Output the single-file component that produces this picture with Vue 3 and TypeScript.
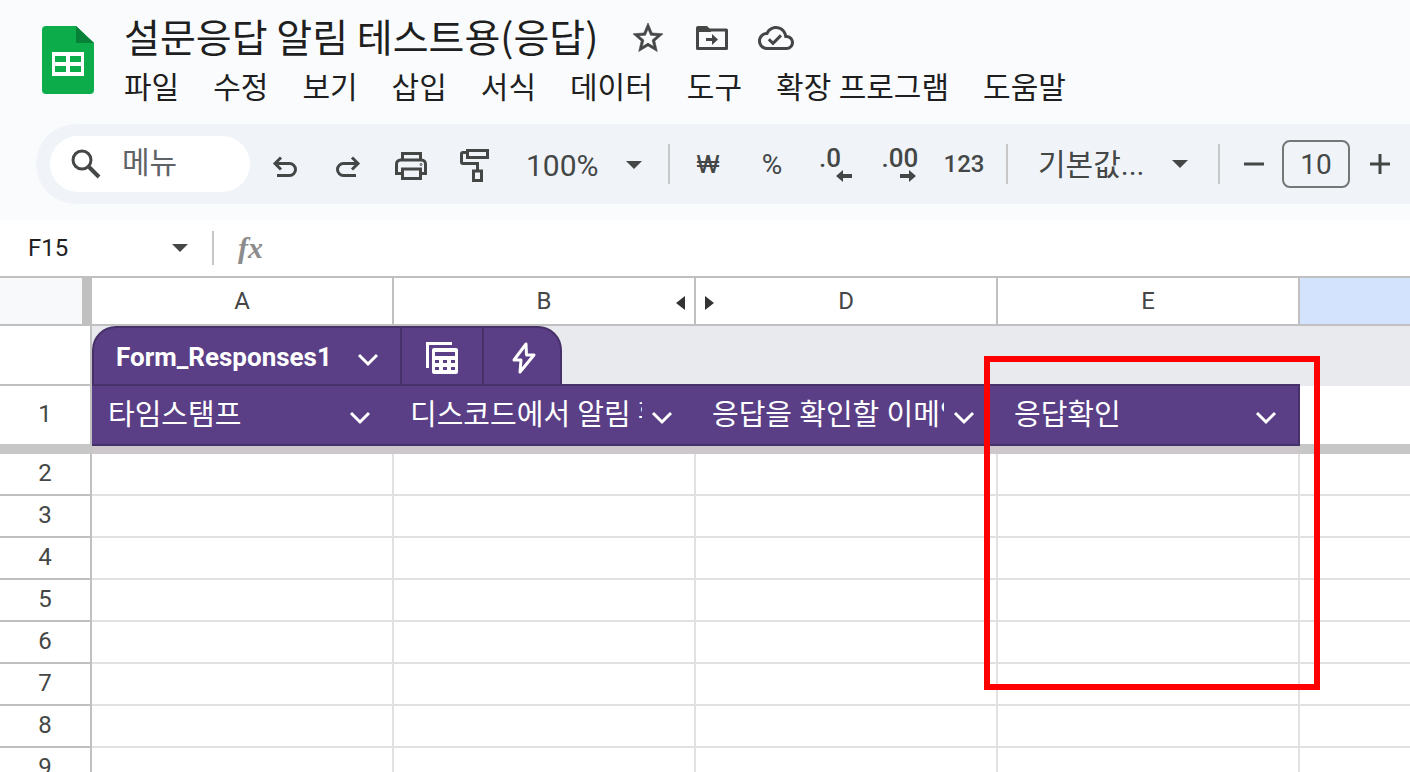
<script setup lang="ts">
import { ref } from 'vue'

interface Column {
  id: string
  label: string
  hiddenAfter?: boolean
  hiddenBefore?: boolean
  marked?: boolean
}

const title = ref('설문응답 알림 테스트용(응답)')
const cellName = ref('F15')
const formula = ref('')
const fontSize = ref('10')

const menus: string[] = ['파일', '수정', '보기', '삽입', '서식', '데이터', '도구', '확장 프로그램', '도움말']

const columns: Column[] = [
  { id: 'A', label: '타임스탬프' },
  { id: 'B', label: '디스코드에서 알림 확인', hiddenAfter: true },
  { id: 'D', label: '응답을 확인할 이메일', hiddenBefore: true },
  { id: 'E', label: '응답확인', marked: true },
]

const rows: number[] = [2, 3, 4, 5, 6, 7, 8, 9]
</script>

<template>
  <div class="sheets">
    <header class="top">
      <div class="heading">
        <a class="logo" href="#" aria-label="Sheets">
          <svg width="52" height="68" viewBox="0 0 52 68">
            <path d="M4 0H34L52 17V64a4 4 0 0 1-4 4H4a4 4 0 0 1-4-4V4a4 4 0 0 1 4-4z" fill="#0cac4b" />
            <path d="M34 0L52 17H34z" fill="#078138" />
            <path d="M10 26H42V50H10z" fill="#fff" />
            <path d="M13 30H24V36H13zM28 30H39V36H28zM13 40H24V46H13zM28 40H39V46H28z" fill="#0cac4b" />
          </svg>
        </a>
        <div class="names">
          <div class="title-row">
            <h1>{{ title }}</h1>
            <button class="icon" aria-label="별표">
              <svg width="36" height="36" viewBox="0 0 24 24" fill="currentColor"><path d="M22 9.24l-7.19-.62L12 2 9.19 8.63 2 9.24l5.46 4.73L5.82 21 12 17.27 18.18 21l-1.63-7.03L22 9.24zM12 15.4l-3.76 2.27 1-4.28-3.32-2.88 4.38-.38L12 6.1l1.71 4.04 4.38.38-3.32 2.88 1 4.28L12 15.4z" stroke="currentColor" stroke-width=".4" /></svg>
            </button>
            <button class="icon" aria-label="이동">
              <svg width="36" height="36" viewBox="0 0 36 36" fill="none" stroke="currentColor" stroke-width="3">
                <path d="M3.500 10H32.500V28.500H3.500z" stroke-linejoin="round" />
                <path d="M2 11V8a2 2 0 0 1 2-2H13L17 10V12H2z" fill="currentColor" stroke="none" />
                <path d="M12 19.500H20" />
                <path d="M18 14L24 19.500L18 25z" fill="currentColor" stroke="none" />
              </svg>
            </button>
            <button class="icon" aria-label="드라이브에 저장됨">
              <svg width="36" height="36" viewBox="0 0 24 24" fill="currentColor"><path d="M19.35 10.04C18.67 6.59 15.64 4 12 4 9.11 4 6.61 5.64 5.36 8.04 2.35 8.36 0 10.91 0 14c0 3.31 2.69 6 6 6h13c2.76 0 5-2.24 5-5 0-2.64-2.05-4.78-4.65-4.96zM19 18H6c-2.21 0-4-1.79-4-4 0-2.05 1.53-3.76 3.56-3.97l1.07-.11.5-.95C8.08 7.14 9.94 6 12 6c2.62 0 4.88 1.86 5.39 4.43l.3 1.5 1.53.11c1.56.1 2.78 1.41 2.78 2.96 0 1.65-1.35 3-3 3zm-9-3.82l-2.09-2.09L6.5 13.5 10 17l6.01-6.01-1.41-1.41z" /></svg>
            </button>
          </div>
          <nav class="menus">
            <button v-for="m in menus" :key="m">{{ m }}</button>
          </nav>
        </div>
      </div>

      <div class="toolbar">
        <label class="search">
          <svg width="32" height="32" viewBox="0 0 32 32" fill="none" stroke="#444746" stroke-width="3">
            <circle cx="12" cy="12" r="9" /><path d="M18.500 18.500L29 29" stroke-width="4" />
          </svg>
          <input type="text" placeholder="메뉴" aria-label="메뉴" />
        </label>

        <button class="tool" aria-label="실행취소">
          <svg width="32" height="32" viewBox="0 0 32 32" fill="none" stroke="currentColor" stroke-width="3">
            <path d="M6 15.500H20.500a6 6 0 0 1 0 12H8M12 9.500L6 15.500L12 21.500" />
          </svg>
        </button>
        <button class="tool" aria-label="재실행">
          <svg width="32" height="32" viewBox="0 0 32 32" fill="none" stroke="currentColor" stroke-width="3">
            <path d="M26 15.500H11.500a6 6 0 0 0 0 12H24M20 9.500L26 15.500L20 21.500" />
          </svg>
        </button>
        <button class="tool" aria-label="인쇄">
          <svg width="32" height="32" viewBox="0 0 32 32" fill="none" stroke="currentColor" stroke-width="3">
            <path d="M7.500 12V5.500H25.500V12" />
            <path d="M7 25.500H1.500V16a4 4 0 0 1 4-4H26.500a4 4 0 0 1 4 4V25.500H25" />
            <path d="M7.500 21H25.500V30.500H7.500z" /><circle cx="26" cy="16.500" r="1" stroke-width="1" />
          </svg>
        </button>
        <button class="tool" aria-label="서식 복사">
          <svg width="32" height="36" viewBox="0 0 32 36" fill="none" stroke="currentColor" stroke-width="3">
            <path d="M9.500 4.500H29.500V11.500H9.500z" />
            <path d="M9 6.500H5a1.500 1.500 0 0 0-1.500 1.500V16a1.500 1.500 0 0 0 1.500 1.500H19.500V25" />
            <path d="M15.500 25H23.500V34.500H15.500z" />
          </svg>
        </button>

        <div class="pick zoom">
          <select aria-label="확대/축소"><option>100%</option></select>
          <svg width="16" height="8" viewBox="0 0 16 8"><path d="M0 0H16L8 8z" fill="#444746" /></svg>
        </div>
        <span class="sep"></span>

        <button class="tool format won" aria-label="통화 형식">₩</button>
        <button class="tool format percent">%</button>
        <button class="tool format decimals fewer" aria-label="소수점 이하 자릿수 감소">
          <span>.0</span>
          <svg width="16" height="12" viewBox="0 0 16 12" fill="currentColor"><path d="M0 6L7 0V4H16V8H7V12z" /></svg>
        </button>
        <button class="tool format decimals" aria-label="소수점 이하 자릿수 늘리기">
          <span>.00</span>
          <svg width="16" height="12" viewBox="0 0 16 12" fill="currentColor"><path d="M16 6L9 0V4H0V8H9V12z" /></svg>
        </button>
        <button class="tool format">123</button>
        <span class="sep"></span>

        <div class="pick font">
          <select aria-label="글꼴"><option>기본값...</option></select>
          <svg width="16" height="8" viewBox="0 0 16 8"><path d="M0 0H16L8 8z" fill="#444746" /></svg>
        </div>
        <span class="sep"></span>

        <button class="step" aria-label="글꼴 크기 줄이기">
          <svg width="20" height="22" viewBox="0 0 20 22"><path d="M0 11H20" stroke="#444746" stroke-width="3" /></svg>
        </button>
        <input v-model="fontSize" class="size" type="text" aria-label="글꼴 크기" />
        <button class="step" aria-label="글꼴 크기 늘리기">
          <svg width="22" height="22" viewBox="0 0 22 22"><path d="M1 11H21M11 1V21" stroke="#444746" stroke-width="3" /></svg>
        </button>
      </div>
    </header>

    <div class="formula-bar">
      <input v-model="cellName" class="cell-name" type="text" aria-label="이름 상자" />
      <button class="caret" aria-label="이름이 지정된 범위">
        <svg width="16" height="8" viewBox="0 0 16 8"><path d="M0 0H16L8 8z" fill="#444746" /></svg>
      </button>
      <label for="formula" class="fx">fx</label>
      <input id="formula" v-model="formula" class="formula" type="text" />
    </div>

    <table class="grid">
      <colgroup>
        <col class="c-num" />
        <col v-for="c in columns" :key="c.id" class="c-data" />
        <col />
      </colgroup>
      <thead>
        <tr class="letters">
          <td class="corner"></td>
          <th v-for="c in columns" :key="c.id" scope="col">
            <div class="letter">
              <button v-if="c.hiddenBefore" class="reveal before" aria-label="숨겨진 열 표시">
                <svg width="9" height="14" viewBox="0 0 9 14"><path d="M0 0L9 7L0 14z" fill="#333" /></svg>
              </button>
              <span>{{ c.id }}</span>
              <button v-if="c.hiddenAfter" class="reveal after" aria-label="숨겨진 열 표시">
                <svg width="9" height="14" viewBox="0 0 9 14"><path d="M9 0L0 7L9 14z" fill="#333" /></svg>
              </button>
            </div>
          </th>
          <th class="selected" scope="col" aria-label="F"></th>
        </tr>
      </thead>
      <tbody>
        <tr class="chip-row">
          <td class="num"></td>
          <td class="chip-cell" colspan="5">
            <div class="chip-line">
              <div class="chip">
                <button class="chip-name">
                  <span>Form_Responses1</span>
                  <svg width="22" height="14" viewBox="0 0 22 14" fill="none" stroke="currentColor" stroke-width="3"><path d="M2 2L11 11L20 2" /></svg>
                </button>
                <button class="chip-icon" aria-label="표 보기">
                  <svg width="34" height="34" viewBox="0 0 34 34">
                    <path d="M27 2.500H2.500V27" fill="none" stroke="currentColor" stroke-width="3" />
                    <rect x="7" y="7" width="26" height="26" rx="2" fill="currentColor" />
                    <path d="M10 11H30V15H10zM10 19H14V22H10zM18 19H22V22H18zM26 19H30V22H26zM10 26H14V29H10zM18 26H22V29H18zM26 26H30V29H26z" fill="#5b3f86" />
                  </svg>
                </button>
                <button class="chip-icon" aria-label="자동화">
                  <svg width="26" height="34" viewBox="0 0 26 34" fill="none" stroke="currentColor" stroke-width="3" stroke-linejoin="round"><path d="M15 3L3 19H10L9 31L23 14H15.500z" /></svg>
                </button>
              </div>
            </div>
          </td>
        </tr>
        <tr class="head-row">
          <th class="num" scope="row">1</th>
          <td v-for="c in columns" :key="c.id" class="head-cell" :class="{ last: c.marked }">
            <div class="head-inner">
              <span>{{ c.label }}</span>
              <button :aria-label="c.label + ' 메뉴'">
                <svg width="22" height="14" viewBox="0 0 22 14" fill="none" stroke="currentColor" stroke-width="3"><path d="M2 2L11 11L20 2" /></svg>
              </button>
            </div>
            <div v-if="c.marked" class="marker"></div>
          </td>
          <td class="plain"></td>
        </tr>
        <tr class="freeze">
          <td></td>
          <td class="under" colspan="4"></td>
          <td></td>
        </tr>
        <tr v-for="r in rows" :key="r" class="data-row">
          <th class="num" scope="row">{{ r }}</th>
          <td v-for="c in columns" :key="c.id"></td>
          <td class="plain"></td>
        </tr>
      </tbody>
    </table>
  </div>
</template>

<style>
body {
  background: #fff;
  overflow: hidden;
}
</style>

<style scoped>
.sheets {
  height: 100vh;
  overflow: hidden;
  color: #1f1f1f;
  background: #fff;
  font-family: Roboto, "Noto Sans CJK KR", sans-serif;
}
.sheets * {
  box-sizing: border-box;
}
button,
input,
select {
  margin: 0;
  padding: 0;
  border: 0;
  background: none;
  color: inherit;
  font: inherit;
  border-radius: 0;
  outline: none;
}
svg {
  display: block;
  flex: none;
}
.top {
  padding-bottom: 16px;
  background: #f9fbfd;
}
.heading {
  display: flex;
  height: 124px;
  padding: 14px 0 0 42px;
}
.logo {
  margin-top: 12px;
}
.names {
  margin-left: 30px;
}
.title-row {
  display: flex;
  align-items: center;
  height: 48px;
  margin-bottom: 2px;
}
h1 {
  margin: 0 18px 0 0;
  padding-bottom: 6px;
  font-size: 39px;
  line-height: 42px;
  font-weight: 400;
  font-family: "Noto Sans CJK KR", sans-serif;
  white-space: nowrap;
}
.icon {
  width: 64px;
  display: flex;
  justify-content: center;
  color: #444746;
}
.menus {
  display: flex;
  gap: 34px;
  height: 48px;
}
.menus button {
  font-size: 30px;
  line-height: 48px;
  white-space: nowrap;
}
.toolbar {
  display: flex;
  align-items: center;
  height: 80px;
  margin-left: 36px;
  padding-left: 14px;
  border-radius: 40px 0 0 40px;
  background: #f0f4f9;
  color: #444746;
  overflow: hidden;
}
.toolbar > * {
  flex: none;
}
.search {
  display: flex;
  align-items: center;
  gap: 20px;
  width: 200px;
  height: 56px;
  margin-right: 3px;
  padding-left: 20px;
  border-radius: 28px;
  background: #fff;
}
.search input {
  width: 100px;
  height: 48px;
  padding-bottom: 4px;
  font-size: 30px;
}
.search input::placeholder {
  color: #5f6368;
  opacity: 1;
}
.tool {
  display: flex;
  align-items: center;
  justify-content: center;
  width: 63px;
  height: 56px;
}
.format {
  width: 64px;
  font-size: 24px;
  font-weight: 500;
}
.won {
  font-family: Inter, sans-serif;
}
.percent {
  font-size: 28px;
  font-weight: 400;
}
.decimals {
  flex-direction: column;
  font-size: 26px;
  line-height: 24px;
}
.fewer span {
  margin-right: 12px;
}
.decimals svg {
  align-self: flex-end;
  margin-right: 16px;
}
.pick {
  display: grid;
  align-items: center;
  height: 56px;
}
.pick > * {
  grid-area: 1 / 1;
}
.pick svg {
  justify-self: end;
  pointer-events: none;
}
.pick select {
  width: 100%;
  height: 48px;
  appearance: none;
}
.zoom {
  width: 153px;
  padding: 2px 16px 0 21px;
  font-size: 30px;
}
.font {
  width: 194px;
  padding: 0 20px 0 24px;
  font-size: 30px;
}
.sep {
  width: 2px;
  height: 40px;
  margin: 0 6px 0 10px;
  background: #c7c7c7;
}
.step {
  display: flex;
  justify-content: center;
  width: 56px;
}
.step:last-child {
  width: 60px;
}
.size {
  width: 68px;
  height: 48px;
  border: 2px solid #747775;
  border-radius: 8px;
  font-size: 28px;
  text-align: center;
}
.formula-bar {
  display: flex;
  align-items: center;
  height: 58px;
  border-bottom: 2px solid #c0c0c0;
}
.cell-name {
  width: 160px;
  padding-left: 28px;
  font-size: 24px;
}
.caret {
  display: flex;
  justify-content: center;
  width: 40px;
}
.fx {
  margin-left: 12px;
  padding-left: 24px;
  border-left: 2px solid #c7c7c7;
  color: #8c8c8c;
  font: italic bold 30px/34px "Liberation Serif", serif;
}
.formula {
  flex: 1;
  margin-left: 20px;
  font-size: 24px;
}
.grid {
  width: 100%;
  border-collapse: separate;
  border-spacing: 0;
  table-layout: fixed;
}
.grid th,
.grid td {
  padding: 0;
  font-weight: 400;
  border-right: 2px solid #e1e1e1;
  border-bottom: 2px solid #e1e1e1;
}
.c-num {
  width: 92px;
}
.c-data {
  width: 302px;
}
.letters {
  height: 48px;
}
.grid .letters > * {
  border-color: #c0c0c0;
  font-size: 24px;
  color: #444746;
}
.grid .letters .corner {
  border-right: 10px solid #c0c0c0;
  background: #f8f9fa;
}
.grid .letters .selected {
  background: #d3e3fd;
  border-right: 0;
}
.letter {
  position: relative;
  display: flex;
  align-items: center;
  justify-content: center;
  height: 46px;
}
.reveal {
  position: absolute;
  top: 18px;
}
.before {
  left: 9px;
}
.after {
  right: 9px;
}
.chip-row,
.head-row {
  height: 60px;
}
.grid .num {
  padding-bottom: 2px;
  border-color: #c0c0c0;
  font-size: 24px;
  color: #444746;
}
.grid .chip-cell {
  border: 0;
  background: #e8eaed;
  vertical-align: top;
}
.chip-line {
  width: 1208px;
  height: 60px;
  border-bottom: 2px solid #473169;
}
.chip {
  display: flex;
  width: 470px;
  height: 58px;
  overflow: hidden;
  border: 2px solid #473169;
  border-bottom: 0;
  border-radius: 24px 24px 0 0;
  background: #5b3f86;
  color: #fff;
}
.chip button {
  padding-top: 4px;
}
.chip .chip-name {
  display: flex;
  align-items: center;
  justify-content: space-between;
  width: 306px;
  padding: 2px 21px 0 22px;
  font-size: 26px;
  font-weight: 700;
}
.chip-icon {
  display: flex;
  align-items: center;
  justify-content: center;
  width: 82px;
  border-left: 2px solid #473169;
}
.chip > * {
  flex: none;
}
.chip-name svg,
.head-inner svg {
  margin-top: 6px;
}
.grid .head-cell {
  position: relative;
  border-right: 0;
  border-bottom-color: #473169;
  background: #5b3f86;
  color: #fff;
}
.grid .head-cell.last {
  border-right: 2px solid #473169;
}
.head-inner {
  display: flex;
  align-items: center;
  justify-content: space-between;
  width: 302px;
  padding: 0 23px 0 16px;
}
.head-inner span {
  width: 232px;
  overflow: hidden;
  white-space: nowrap;
  font-size: 29px;
  line-height: 56px;
}
.marker {
  position: absolute;
  z-index: 1;
  top: -30px;
  left: -14px;
  width: 336px;
  height: 334px;
  border: 6px solid #ff0000;
  pointer-events: none;
}
.grid .head-row > .num,
.grid .head-row > .plain {
  border-bottom-color: #c7c7c7;
}
.grid .plain {
  border-right: 0;
}
.freeze {
  height: 8px;
}
.grid .freeze td {
  border: 0;
  background: #c7c7c7;
}
.grid .freeze .under {
  background: #cdc6ca;
}
.data-row {
  height: 42px;
}
</style>
